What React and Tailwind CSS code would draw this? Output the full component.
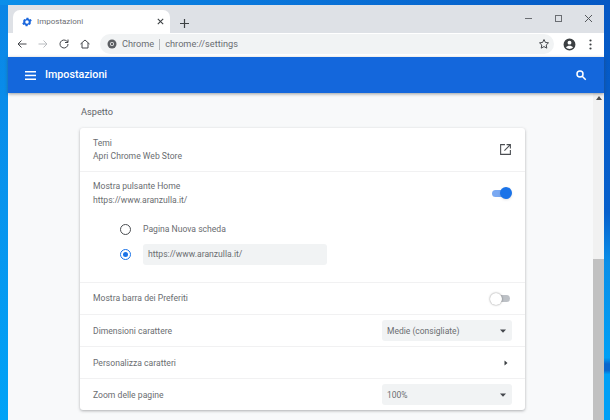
import React from "react";

function Row({ children, className = "" }) {
  return <div className={"flex items-center justify-between border-t border-[#f1f1f2] px-[13px] " + className}>{children}</div>;
}

function Select({ label }) {
  return (
    <div className="flex h-[21px] w-[130px] items-center justify-between rounded-[3px] bg-[#f1f3f4] pl-[5px] pr-[3px] text-[8.5px] text-[#6a6d71]">
      <span className="pt-[1px]">{label}</span>
      <svg width="12" height="12" viewBox="0 0 12 12"><path d="M3 4.5h6L6 7.8z" fill="#44474c" /></svg>
    </div>
  );
}

export default function App() {
  return (
    <div className="flex h-[420px] w-[610px] flex-col overflow-hidden font-['Roboto',sans-serif]">
      <div className="h-[5px] shrink-0 bg-[linear-gradient(90deg,#0a8fea_0%,#0a78dc_40%,#0558c4_100%)]" />
      <div className="flex min-h-0 flex-1">
        <div className="w-[8px] shrink-0 bg-[linear-gradient(180deg,#0a85e6_0%,#0895ee_50%,#00a3f7_100%)]" />
        <div className="flex min-w-0 flex-1 flex-col">
          <div className="flex h-[28px] shrink-0 items-end bg-[#dee1e6] pl-[5px]">
            <div className="flex h-[23px] w-[157px] items-center rounded-t-[7px] bg-white pl-[8px] pr-[5px]">
              <svg width="12" height="12" viewBox="0 0 24 24" fill="#1a66dc"><path d="M19.4 13a7.5 7.5 0 0 0 0-2l2.1-1.6-2-3.5-2.5 1a7.5 7.5 0 0 0-1.7-1l-.4-2.6h-4l-.4 2.6a7.5 7.5 0 0 0-1.7 1l-2.5-1-2 3.5L4.6 11a7.5 7.5 0 0 0 0 2l-2.1 1.6 2 3.5 2.5-1a7.5 7.5 0 0 0 1.7 1l.4 2.6h4l.4-2.6a7.5 7.5 0 0 0 1.7-1l2.5 1 2-3.5zM12 15.5a3.5 3.5 0 1 1 0-7 3.5 3.5 0 0 1 0 7z" /></svg>
              <span className="ml-[4px] flex-1 text-[8px] text-[#6b6e73]">Impostazioni</span>
              <svg width="9" height="9" viewBox="0 0 10 10" stroke="#3c4043" strokeWidth="1.2"><path d="M2 2l6 6M8 2l-6 6" /></svg>
            </div>
            <svg className="mb-[4px] ml-[9px]" width="11" height="11" viewBox="0 0 11 11" stroke="#3c4043" strokeWidth="1.2"><path d="M5.5 1v9M1 5.5h9" /></svg>
            <div className="mb-[6px] ml-auto flex h-[17px] items-center gap-[21px] pr-[11px]">
              <svg width="9" height="9" viewBox="0 0 9 9" stroke="#6a6d72"><path d="M1 4.5h7" /></svg>
              <svg width="9" height="9" viewBox="0 0 9 9" stroke="#6a6d72" fill="none"><rect x="1.5" y="1.5" width="6" height="6" /></svg>
              <svg width="9" height="9" viewBox="0 0 9 9" stroke="#55585c"><path d="M1 1l7 7M8 1l-7 7" /></svg>
            </div>
          </div>
          <div className="flex h-[24px] shrink-0 items-center bg-white pb-[2px] pl-[8px] pr-[12px]">
            <svg width="12" height="12" viewBox="0 0 24 24" fill="none" stroke="#44474c" strokeWidth="2"><path d="M21 12H4M11 5l-7 7 7 7" /></svg>
            <svg className="ml-[9px]" width="12" height="12" viewBox="0 0 24 24" fill="none" stroke="#b9bcc0" strokeWidth="2"><path d="M3 12h17M13 5l7 7-7 7" /></svg>
            <svg className="ml-[9px]" width="12" height="12" viewBox="0 0 24 24" fill="none" stroke="#44474c" strokeWidth="2"><path d="M20 12a8 8 0 1 1-2.5-5.8L20 8.5M20 3v6h-6" /></svg>
            <svg className="ml-[9px]" width="12" height="12" viewBox="0 0 24 24" fill="none" stroke="#44474c" strokeWidth="2"><path d="M3 12l9-8 9 8M6 10v10h12V10" /></svg>
            <div className="ml-[9px] flex h-[20px] flex-1 items-center rounded-full bg-[#f1f3f4] pl-[7px] pr-[4px] text-[9.2px] text-[#6a6d72]">
              <svg width="10" height="10" viewBox="0 0 10 10"><circle cx="5" cy="5" r="4.5" fill="#5c5f63" /><circle cx="5" cy="5" r="2" fill="#f1f3f4" /><circle cx="5" cy="5" r="1.2" fill="#5c5f63" /></svg>
              <span className="ml-[5px]">Chrome</span>
              <span className="mx-[5px] h-[11px] w-px bg-[#b5b8bc]" />
              <span>chrome://settings</span>
              <svg className="ml-auto" width="12" height="12" viewBox="0 0 24 24" fill="none" stroke="#44474c" strokeWidth="2"><path d="M12 3l2.8 5.9 6.2.8-4.6 4.3 1.2 6.3L12 17.2l-5.6 3.100 1.2-6.3L3 9.700l6.2-.8z" /></svg>
            </div>
            <svg className="ml-[9px]" width="13" height="13" viewBox="0 0 24 24" fill="#3c4043"><path d="M12 1a11 11 0 1 0 0 22 11 11 0 0 0 0-22zm0 4a3.6 3.6 0 1 1 0 7.2A3.6 3.6 0 0 1 12 5zm0 15.5a8.6 8.6 0 0 1-6.8-3.4c1.5-2 4.4-3 6.8-3s5.3 1 6.8 3a8.6 8.6 0 0 1-6.8 3.4z" /></svg>
            <svg className="ml-[13px]" width="3" height="11" viewBox="0 0 3 11" fill="#3c4043"><circle cx="1.5" cy="1.5" r="1.1" /><circle cx="1.5" cy="5.5" r="1.1" /><circle cx="1.5" cy="9.5" r="1.1" /></svg>
          </div>
          <div className="z-10 flex h-[36px] shrink-0 items-center bg-[#1467dc] px-[17px] shadow-[0_1px_3px_rgba(60,64,67,0.5)]">
            <svg width="11" height="9" viewBox="0 0 11 9" fill="white"><rect width="11" height="1.5" /><rect y="3.7" width="11" height="1.5" /><rect y="7.5" width="11" height="1.5" /></svg>
            <span className="ml-[9px] text-[10.7px] font-medium text-white">Impostazioni</span>
            <svg className="ml-auto" width="12" height="12" viewBox="0 0 24 24" fill="none" stroke="white" strokeWidth="3"><circle cx="10" cy="10" r="6" /><path d="M14.5 14.5l7 7" /></svg>
          </div>
          <div className="flex min-h-0 flex-1 bg-[#f8f9fa]">
            <div className="min-w-0 flex-1 pl-[72px] pr-[68px] pt-[12px]">
              <div className="h-[23px] pl-[1px] text-[9.2px] leading-[14px] text-[#5f6368]">Aspetto</div>
              <div className="rounded-[3px] bg-white text-[8.6px] text-[#6a6d71] shadow-[0_1px_3px_rgba(60,64,67,0.4)]">
                <div className="flex h-[43px] items-center justify-between px-[13px]">
                  <div className="pt-[1px] leading-[13px]"><div>Temi</div><div>Apri Chrome Web Store</div></div>
                  <svg width="13" height="13" viewBox="0 0 24 24" fill="none" stroke="#4a4d51" strokeWidth="2"><path d="M11 3H3v18h18v-8M14 3h7v7M21 3L10 14" /></svg>
                </div>
                <div className="border-t border-[#f1f1f2] px-[13px] pt-[7px]">
                  <div className="flex items-center justify-between">
                    <div className="leading-[14px]"><div>Mostra pulsante Home</div><div>https://www.aranzulla.it/</div></div>
                    <div className="relative mr-[2px] h-[7px] w-[18px] rounded-full bg-[#7aa9f2]">
                      <div className="absolute right-[-2px] top-[-2.5px] h-[12px] w-[12px] rounded-full bg-[#1a73e8] shadow-sm" />
                    </div>
                  </div>
                  <div className="mt-[10px] flex h-[24px] items-center pl-[27px]">
                    <div className="h-[11px] w-[11px] rounded-full border-[1.5px] border-[#4a4d51]" />
                    <span className="ml-[12px]">Pagina Nuova scheda</span>
                  </div>
                  <div className="mt-[3px] flex h-[21px] items-center pl-[27px]">
                    <div className="flex h-[11px] w-[11px] items-center justify-center rounded-full border-[1.5px] border-[#1a73e8]"><div className="h-[5px] w-[5px] rounded-full bg-[#1a73e8]" /></div>
                    <div className="ml-[12px] flex h-[21px] w-[184px] items-center rounded-[3px] bg-[#f1f3f4] pl-[5px]">https://www.aranzulla.it/</div>
                  </div>
                  <div className="h-[17px]" />
                </div>
                <Row className="h-[32px]">
                  <span>Mostra barra dei Preferiti</span>
                  <div className="relative mr-[2px] h-[7px] w-[18px] rounded-full bg-[#bdc1c6]">
                    <div className="absolute left-[-2px] top-[-2.5px] h-[12px] w-[12px] rounded-full bg-white shadow-[0_0_2px_rgba(0,0,0,0.5)]" />
                  </div>
                </Row>
                <Row className="h-[32px]"><span className="pt-[1px]">Dimensioni carattere</span><Select label="Medie (consigliate)" /></Row>
                <Row className="h-[32px]">
                  <span className="pt-[1px]">Personalizza caratteri</span>
                  <svg className="mr-[3px]" width="6" height="8" viewBox="0 0 6 8"><path d="M1.5 1.500L4.500 4l-3 2.5z" fill="#3c4043" /></svg>
                </Row>
                <Row className="h-[32px]"><span className="pt-[1px]">Zoom delle pagine</span><Select label="100%" /></Row>
              </div>
            </div>
            <div className="flex w-[11px] shrink-0 flex-col bg-[#f1f1f1]">
              <div className="flex h-[10px] items-center justify-center">
                <svg width="6" height="4" viewBox="0 0 6 4"><path d="M3 0l3 4H0z" fill="#505050" /></svg>
              </div>
              <div className="mt-[156px] flex-1 bg-[#c1c1c1]" />
            </div>
          </div>
        </div>
        <div className="w-[6px] shrink-0 bg-[linear-gradient(180deg,#0558c4_0%,#0760cc_50%,#0a8fe8_62%,#00a0f5_85%,#0a66cc_86.5%,#0a66cc_88%,#00a0f5_89%,#00a0f5_100%)]" />
      </div>
    </div>
  );
}
